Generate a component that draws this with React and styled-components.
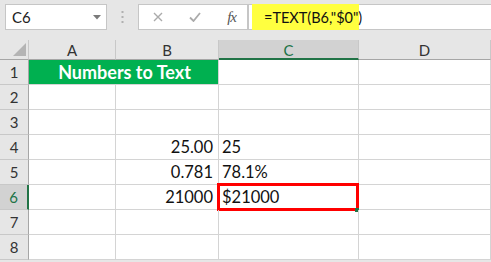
import React from "react";
import styled, { createGlobalStyle } from "styled-components";

const Global = createGlobalStyle`
  html, body { margin: 0; padding: 0; background: #ffffff; }
  body { font-family: Lato, "Open Sans", sans-serif; overflow: hidden; }
  * { box-sizing: border-box; }
`;

const Page = styled.div`
  width: 491px;
  height: 262px;
  background: #e6e6e6;
  overflow: hidden;
`;

const Toolbar = styled.div`
  height: 40px;
  display: flex;
  align-items: flex-start;
  padding: 4px 0 0 5px;
  background: #e6e6e6;
`;

const NameBox = styled.div`
  width: 102px;
  height: 26px;
  background: #fff;
  border: 1px solid #c6c6c6;
  display: flex;
  align-items: center;
  justify-content: space-between;
  padding: 0 4px 0 6px;
  font-size: 15px;
  color: #222;
`;

const Grip = styled.div`
  width: 31px;
  height: 26px;
  display: flex;
  align-items: center;
  justify-content: center;
`;

const FxBox = styled.div`
  width: 110px;
  height: 26px;
  background: #fff;
  border: 1px solid #c6c6c6;
  display: flex;
  align-items: center;
  justify-content: space-between;
  padding: 0 11px 0 14px;
`;

const Fx = styled.span`
  font-family: "Liberation Serif", serif;
  font-style: italic;
  font-size: 15px;
  color: #555;
  letter-spacing: -1px;
`;

const FormulaBox = styled.div`
  flex: 1;
  height: 26px;
  background: #fff;
  border: 1px solid #c6c6c6;
  border-right: none;
  display: flex;
  align-items: stretch;
  padding-left: 3px;
`;

const Highlight = styled.div`
  width: 107px;
  margin-top: -1px;
  height: 26px;
  background: #ffff40;
  display: flex;
  align-items: center;
  padding-left: 12px;
  font-size: 14.5px;
  color: #111;
`;

const Sheet = styled.div`
  display: grid;
  grid-template-columns: 29px 87px 103px 140px 1fr;
  grid-template-rows: 20px repeat(8, 25px);
  background: #fff;
`;

const Corner = styled.div`
  background: #e6e6e6;
  border-right: 1px solid #c8c8c8;
  border-bottom: 1px solid #a6a6a6;
  display: flex;
  align-items: flex-end;
  justify-content: flex-end;
  padding: 0 2px 3px 0;
`;

const ColHead = styled.div`
  background: ${p => (p.$active ? "#d2d2d2" : "#e6e6e6")};
  border-right: 1px solid #c8c8c8;
  border-bottom: ${p => (p.$active ? "2px solid #217346" : "1px solid #a6a6a6")};
  color: ${p => (p.$active ? "#217346" : "#333")};
  font-size: 15px;
  display: flex;
  align-items: center;
  justify-content: center;
  padding-top: ${p => (p.$active ? "1px" : "0")};
`;

const RowHead = styled.div`
  background: ${p => (p.$active ? "#d2d2d2" : "#e6e6e6")};
  border-right: ${p => (p.$active ? "2px solid #217346" : "1px solid #a6a6a6")};
  border-bottom: 1px solid #c8c8c8;
  color: ${p => (p.$active ? "#217346" : "#333")};
  font-size: 15px;
  display: flex;
  align-items: center;
  justify-content: center;
`;

const Cell = styled.div`
  position: relative;
  border-right: 1px solid #d4d4d4;
  border-bottom: 1px solid #d4d4d4;
  font-size: 16.5px;
  color: #111;
  display: flex;
  align-items: center;
  justify-content: ${p => (p.$right ? "flex-end" : "flex-start")};
  padding: 0 5px 0 3px;
  white-space: nowrap;
`;

const TitleCell = styled.div`
  grid-column: span 2;
  background: #00b050;
  border-bottom: 1px solid #d4d4d4;
  border-right: 1px solid #d4d4d4;
  color: #fff;
  font-weight: 700;
  font-size: 18px;
  display: flex;
  align-items: center;
  justify-content: center;
  padding-left: 2px;
`;

const Selection = styled.div`
  position: absolute;
  left: -2px;
  top: -2px;
  right: -1px;
  bottom: -2px;
  border: 3px solid #ff0000;
  pointer-events: none;
`;

const Handle = styled.div`
  position: absolute;
  right: -3px;
  bottom: -4px;
  width: 4px;
  height: 4px;
  background: #217346;
`;

const rows = [
  { n: 1 },
  { n: 2, b: "", c: "" },
  { n: 3, b: "", c: "" },
  { n: 4, b: "25.00", c: "25" },
  { n: 5, b: "0.781", c: "78.1%" },
  { n: 6, b: "21000", c: "$21000", sel: true },
  { n: 7, b: "", c: "" },
  { n: 8, b: "", c: "" },
];

export default function App() {
  return (
    <Page>
      <Global />
      <Toolbar>
        <NameBox>
          <span>C6</span>
          <svg width="10" height="6" viewBox="0 0 10 6">
            <path d="M1 1 L9 1 L5 5.5 Z" fill="#7a7a7a" />
          </svg>
        </NameBox>
        <Grip>
          <svg width="3" height="12" viewBox="0 0 3 12">
            <rect x="0.5" y="0" width="2" height="2" fill="#b0b0b0" />
            <rect x="0.5" y="5" width="2" height="2" fill="#b0b0b0" />
            <rect x="0.5" y="10" width="2" height="2" fill="#b0b0b0" />
          </svg>
        </Grip>
        <FxBox>
          <svg width="10" height="10" viewBox="0 0 10 10">
            <path d="M1 1 L9 9 M9 1 L1 9" stroke="#ababab" strokeWidth="1.4" />
          </svg>
          <svg width="12" height="10" viewBox="0 0 12 10">
            <path d="M1 5.5 L4.5 9 L11 1" stroke="#ababab" strokeWidth="1.8" fill="none" />
          </svg>
          <Fx>fx</Fx>
        </FxBox>
        <FormulaBox>
          <Highlight>=TEXT(B6,"$0")</Highlight>
        </FormulaBox>
      </Toolbar>
      <Sheet>
        <Corner>
          <svg width="13" height="13" viewBox="0 0 13 13">
            <path d="M13 0 L13 13 L0 13 Z" fill="#b4b4b4" />
          </svg>
        </Corner>
        <ColHead>A</ColHead>
        <ColHead>B</ColHead>
        <ColHead $active>C</ColHead>
        <ColHead>D</ColHead>
        {rows.map(r => (
          <React.Fragment key={r.n}>
            <RowHead $active={r.sel}>{r.n}</RowHead>
            {r.n === 1 ? (
              <TitleCell>Numbers to Text</TitleCell>
            ) : (
              <>
                <Cell />
                <Cell $right>{r.b}</Cell>
              </>
            )}
            <Cell>
              {r.c}
              {r.sel && (
                <Selection>
                  <Handle />
                </Selection>
              )}
            </Cell>
            <Cell />
          </React.Fragment>
        ))}
      </Sheet>
    </Page>
  );
}
